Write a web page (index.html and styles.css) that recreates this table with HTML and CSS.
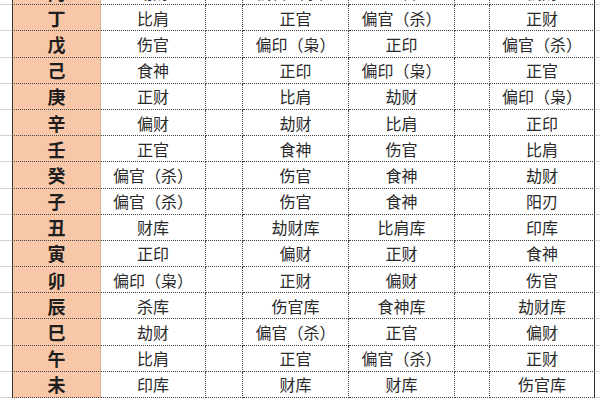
FILE: index.html
```html
<!DOCTYPE html>
<html lang="zh">
<head>
<meta charset="utf-8">
<link rel="stylesheet" href="styles.css">
</head>
<body>
<div class="sheet">
  <div class="row"><div class="pad"></div><div class="stem">丙</div><div class="c">劫财</div><div class="e"></div><div class="c">偏官（杀）</div><div class="c">正官</div><div class="e"></div><div class="c last">偏财</div><div class="pad"></div></div>
  <div class="row"><div class="pad"></div><div class="stem">丁</div><div class="c">比肩</div><div class="e"></div><div class="c">正官</div><div class="c">偏官（杀）</div><div class="e"></div><div class="c last">正财</div><div class="pad"></div></div>
  <div class="row"><div class="pad"></div><div class="stem">戊</div><div class="c">伤官</div><div class="e"></div><div class="c">偏印（枭）</div><div class="c">正印</div><div class="e"></div><div class="c last">偏官（杀）</div><div class="pad"></div></div>
  <div class="row"><div class="pad"></div><div class="stem">己</div><div class="c">食神</div><div class="e"></div><div class="c">正印</div><div class="c">偏印（枭）</div><div class="e"></div><div class="c last">正官</div><div class="pad"></div></div>
  <div class="row"><div class="pad"></div><div class="stem">庚</div><div class="c">正财</div><div class="e"></div><div class="c">比肩</div><div class="c">劫财</div><div class="e"></div><div class="c last">偏印（枭）</div><div class="pad"></div></div>
  <div class="row"><div class="pad"></div><div class="stem">辛</div><div class="c">偏财</div><div class="e"></div><div class="c">劫财</div><div class="c">比肩</div><div class="e"></div><div class="c last">正印</div><div class="pad"></div></div>
  <div class="row"><div class="pad"></div><div class="stem">壬</div><div class="c">正官</div><div class="e"></div><div class="c">食神</div><div class="c">伤官</div><div class="e"></div><div class="c last">比肩</div><div class="pad"></div></div>
  <div class="row"><div class="pad"></div><div class="stem">癸</div><div class="c">偏官（杀）</div><div class="e"></div><div class="c">伤官</div><div class="c">食神</div><div class="e"></div><div class="c last">劫财</div><div class="pad"></div></div>
  <div class="row"><div class="pad"></div><div class="stem">子</div><div class="c">偏官（杀）</div><div class="e"></div><div class="c">伤官</div><div class="c">食神</div><div class="e"></div><div class="c last">阳刃</div><div class="pad"></div></div>
  <div class="row"><div class="pad"></div><div class="stem">丑</div><div class="c">财库</div><div class="e"></div><div class="c">劫财库</div><div class="c">比肩库</div><div class="e"></div><div class="c last">印库</div><div class="pad"></div></div>
  <div class="row"><div class="pad"></div><div class="stem">寅</div><div class="c">正印</div><div class="e"></div><div class="c">偏财</div><div class="c">正财</div><div class="e"></div><div class="c last">食神</div><div class="pad"></div></div>
  <div class="row"><div class="pad"></div><div class="stem">卯</div><div class="c">偏印（枭）</div><div class="e"></div><div class="c">正财</div><div class="c">偏财</div><div class="e"></div><div class="c last">伤官</div><div class="pad"></div></div>
  <div class="row"><div class="pad"></div><div class="stem">辰</div><div class="c">杀库</div><div class="e"></div><div class="c">伤官库</div><div class="c">食神库</div><div class="e"></div><div class="c last">劫财库</div><div class="pad"></div></div>
  <div class="row"><div class="pad"></div><div class="stem">巳</div><div class="c">劫财</div><div class="e"></div><div class="c">偏官（杀）</div><div class="c">正官</div><div class="e"></div><div class="c last">偏财</div><div class="pad"></div></div>
  <div class="row"><div class="pad"></div><div class="stem">午</div><div class="c">比肩</div><div class="e"></div><div class="c">正官</div><div class="c">偏官（杀）</div><div class="e"></div><div class="c last">正财</div><div class="pad"></div></div>
  <div class="row"><div class="pad"></div><div class="stem">未</div><div class="c">印库</div><div class="e"></div><div class="c">财库</div><div class="c">财库</div><div class="e"></div><div class="c last">伤官库</div><div class="pad"></div></div>
</div>
</body>
</html>
```
FILE: styles.css
```css
* { box-sizing: border-box; }
html, body {
  margin: 0;
  padding: 0;
  background: #ffffff;
  width: 600px;
  height: 400px;
  overflow: hidden;
}
.sheet {
  margin-top: -21px;
  display: flex;
  flex-direction: column;
  font-family: "Noto Sans CJK SC", "Noto Sans", sans-serif;
  font-size: 16px;
  color: #2a2a2a;
}
.row {
  display: grid;
  grid-template-columns: 12px 89px 105px 37px 106px 106px 35px 105px 5px;
  height: 26.2px;
}
.row > div {
  display: flex;
  align-items: center;
  justify-content: center;
  line-height: 1;
  border-bottom: 1px dotted #444444;
}
.pad {
  border-bottom: 1px solid #d4d4d4 !important;
}
.stem {
  background: #f8c7a7;
  font-weight: bold;
  font-size: 18px;
  color: #1e1e1e;
  border-left: 1px solid #333333;
  border-right: 1px solid #d9b49a;
}
.c, .e {
  border-right: 1px dotted #444444;
}
.c.last {
  border-right: 1px solid #333333;
}
```
